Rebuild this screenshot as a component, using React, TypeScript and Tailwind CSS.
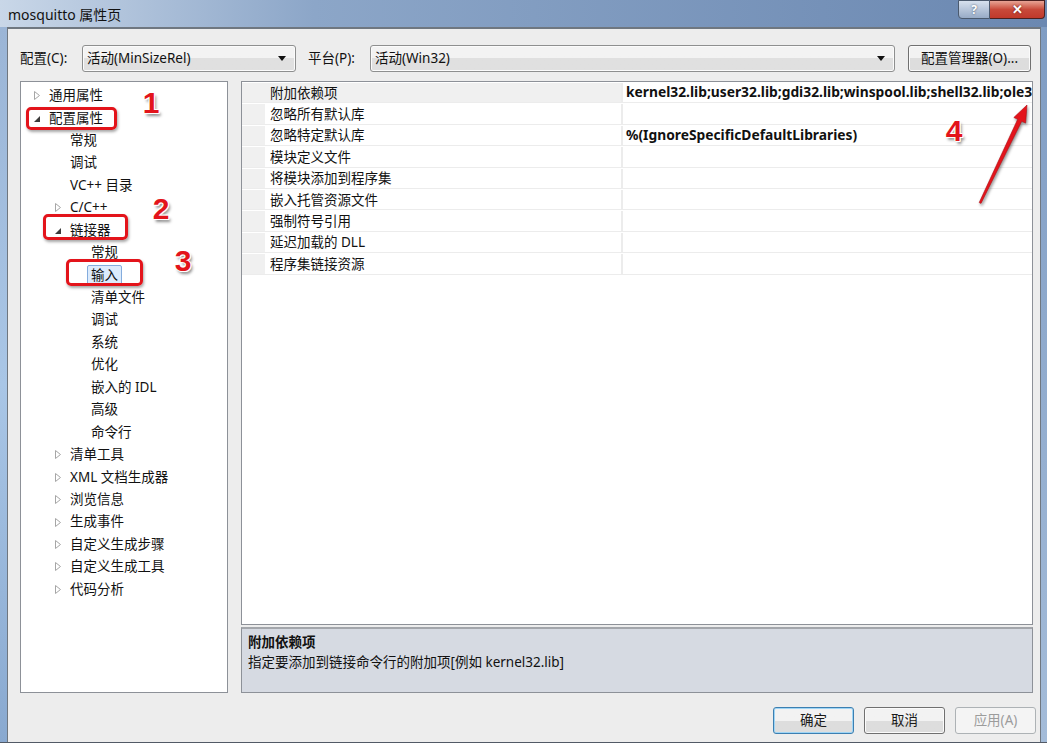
import React from "react";

type TreeNode = {
  label: string;
  level: number;
  arrow?: "open" | "closed";
  selected?: boolean;
};

const treeItems: TreeNode[] = [
  { label: "通用属性", level: 0, arrow: "closed" },
  { label: "配置属性", level: 0, arrow: "open" },
  { label: "常规", level: 1 },
  { label: "调试", level: 1 },
  { label: "VC++ 目录", level: 1 },
  { label: "C/C++", level: 1, arrow: "closed" },
  { label: "链接器", level: 1, arrow: "open" },
  { label: "常规", level: 2 },
  { label: "输入", level: 2, selected: true },
  { label: "清单文件", level: 2 },
  { label: "调试", level: 2 },
  { label: "系统", level: 2 },
  { label: "优化", level: 2 },
  { label: "嵌入的 IDL", level: 2 },
  { label: "高级", level: 2 },
  { label: "命令行", level: 2 },
  { label: "清单工具", level: 1, arrow: "closed" },
  { label: "XML 文档生成器", level: 1, arrow: "closed" },
  { label: "浏览信息", level: 1, arrow: "closed" },
  { label: "生成事件", level: 1, arrow: "closed" },
  { label: "自定义生成步骤", level: 1, arrow: "closed" },
  { label: "自定义生成工具", level: 1, arrow: "closed" },
  { label: "代码分析", level: 1, arrow: "closed" },
];

const properties: { name: string; value?: string }[] = [
  {
    name: "附加依赖项",
    value:
      "kernel32.lib;user32.lib;gdi32.lib;winspool.lib;shell32.lib;ole32.lib;oleaut32.lib;uuid.lib;odbc32.lib;odbccp32.lib;%(AdditionalDependencies)",
  },
  { name: "忽略所有默认库" },
  { name: "忽略特定默认库", value: "%(IgnoreSpecificDefaultLibraries)" },
  { name: "模块定义文件" },
  { name: "将模块添加到程序集" },
  { name: "嵌入托管资源文件" },
  { name: "强制符号引用" },
  { name: "延迟加载的 DLL" },
  { name: "程序集链接资源" },
];

const indent = ["pl-[13px]", "pl-[34px]", "pl-[55px]"];

const TreeArrow = ({ kind }: { kind?: "open" | "closed" }) => {
  if (kind === "closed") {
    return (
      <svg width="6" height="9" viewBox="0 0 6 9" className="mt-[1px]">
        <polygon points="0.5,0.5 5.5,4.5 0.5,8.5" fill="#fff" stroke="#a6a6a6" />
      </svg>
    );
  }
  if (kind === "open") {
    return (
      <svg width="6" height="6" viewBox="0 0 6 6" className="mt-[3px]">
        <polygon points="0,6 6,6 6,0" fill="#3c3c3c" />
      </svg>
    );
  }
  return null;
};

const Combo = ({ text, width }: { text: string; width: string }) => (
  <div
    className={`${width} shrink-0 h-[27px] flex items-center justify-between rounded-[3px] border border-[#8e8f8f] bg-gradient-to-b from-[#f3f3f3] from-50% to-[#e0e0e0] to-50% pl-[4px] pr-[9px] shadow-[inset_0_0_0_1px_#fbfbfb]`}
  >
    <span>{text}</span>
    <svg width="8" height="5" viewBox="0 0 8 5">
      <polygon points="0,0 8,0 4,5" fill="#111" />
    </svg>
  </div>
);

const DialogButton = ({
  label,
  variant,
}: {
  label: string;
  variant?: "default" | "disabled";
}) => {
  const tone =
    variant === "default"
      ? "border-[#3c7fb1] shadow-[inset_0_0_0_1px_#9fd5f5] text-[#1a1a1a]"
      : variant === "disabled"
        ? "border-[#adb2b5] bg-none bg-[#f4f4f4] text-[#9c9c9c]"
        : "border-[#707070] shadow-[inset_0_0_0_1px_#fbfbfb] text-[#1a1a1a]";
  return (
    <div
      className={`w-[81px] h-[27px] flex items-center justify-center rounded-[3px] border bg-gradient-to-b from-[#f2f2f2] from-50% to-[#dddddd] to-50% ${tone}`}
    >
      {label}
    </div>
  );
};

const RedBox = ({ className }: { className: string }) => (
  <div
    className={`absolute rounded-[5px] border-[3px] border-[#e3141b] shadow-[1px_2px_3px_rgba(0,0,0,0.35)] ${className}`}
  />
);

const Marker = ({ n, className }: { n: string; className: string }) => (
  <div
    className={`absolute w-[30px] text-center leading-none font-['Liberation_Sans',Arial,sans-serif] font-bold text-[30px] text-[#e3141b] [text-shadow:1px_0_0_#fff,-1px_0_0_#fff,0_1px_0_#fff,0_-1px_0_#fff,1px_1px_0_#fff,-1px_-1px_0_#fff,2px_3px_3px_rgba(0,0,0,0.45)] ${className}`}
  >
    {n}
  </div>
);

export default function App() {
  return (
    <div className="relative w-[1047px] h-[743px] overflow-hidden flex flex-col bg-[#8aa5c9] font-['Noto_Sans','Noto_Sans_CJK_SC',sans-serif] text-[13.5px] text-[#111]">
      {/* window caption */}
      <div className="h-[27px] shrink-0 flex items-start justify-between bg-gradient-to-r from-[#c9d7e8] via-[#8ca6c8] via-30% to-[#6b88b1] pl-[8px] pr-[2px]">
        <span className="mt-[4px] text-[14px] text-[#111]">mosquitto 属性页</span>
        <div className="flex">
          <div className="w-[32px] h-[19px] flex items-center justify-center rounded-bl-[4px] border border-[#4b5a6e] bg-gradient-to-b from-[#d7e1ee] to-[#98abc6] text-[12px] font-bold text-white [text-shadow:0_0_2px_#3a4a60]">
            ?
          </div>
          <div className="w-[55px] h-[19px] flex items-center justify-center rounded-br-[4px] border border-l-0 border-[#4b2020] bg-gradient-to-b from-[#e7a395] via-[#c8493a] via-50% to-[#c0392b] text-[13px] font-bold text-white [text-shadow:0_0_2px_#5a1010]">
            ✕
          </div>
        </div>
      </div>

      <div className="flex-1 min-h-0 flex">
        {/* left window frame */}
        <div className="w-[7px] shrink-0 bg-gradient-to-b from-[#9bb5d6] via-[#a9c6e6] to-[#89a9d0]" />

        <div className="flex-1 min-w-0 flex flex-col border-t-2 border-l border-r border-[#6f7780] bg-[#ededed] pl-[12px] pr-[7px] pt-[16px]">
          {/* configuration / platform */}
          <div className="h-[27px] flex items-center">
            <span className="w-[62px] shrink-0">配置(C):</span>
            <Combo text="活动(MinSizeRel)" width="w-[214px]" />
            <span className="w-[62px] shrink-0 ml-[12px]">平台(P):</span>
            <Combo text="活动(Win32)" width="w-[525px]" />
            <div className="ml-[13px] w-[123px] shrink-0 h-[27px] flex items-center justify-center rounded-[3px] border border-[#707070] bg-gradient-to-b from-[#f2f2f2] from-50% to-[#dddddd] to-50% shadow-[inset_0_0_0_1px_#fbfbfb]">
              配置管理器(O)...
            </div>
          </div>

          <div className="mt-[9px] h-[612px] flex gap-[13px]">
            {/* category tree */}
            <div className="w-[208px] shrink-0 border border-[#8d9198] bg-white pt-[2px]">
              {treeItems.map((item, i) => (
                <div key={i} className={`h-[22.45px] flex items-center ${indent[item.level]}`}>
                  <div className="w-[15px] flex items-center">
                    <TreeArrow kind={item.arrow} />
                  </div>
                  {item.selected ? (
                    <span className="-ml-[4px] px-[3px] h-[20px] flex items-center rounded-[2px] border border-[#84acdd] bg-[#dcebfc]">
                      {item.label}
                    </span>
                  ) : (
                    <span>{item.label}</span>
                  )}
                </div>
              ))}
            </div>

            {/* property grid and description */}
            <div className="flex-1 min-w-0 flex flex-col gap-[2px]">
              <div className="flex-1 min-w-0 overflow-hidden border border-[#8d9198] bg-white">
                {properties.map((p, i) => (
                  <div key={i} className="h-[21.4px] flex border-b border-[#ececec] pt-[1px]">
                    <div className="w-[23px] shrink-0 bg-[#f0f0f0]" />
                    <div
                      className={`w-[358px] shrink-0 flex items-center pl-[5px] border-r-2 border-[#ececec] ${i === 0 ? "bg-[#f0f0f0]" : ""}`}
                    >
                      {p.name}
                    </div>
                    <div className="flex-1 min-w-0 flex items-center pl-[3px] overflow-hidden whitespace-nowrap font-bold text-[13.8px]">
                      {p.value}
                    </div>
                  </div>
                ))}
              </div>
              <div className="h-[66px] shrink-0 border border-[#8d9198] border-t-2 border-t-[#a3a6ab] bg-[#d6dae2] pl-[6px] pt-[3px]">
                <div className="font-bold leading-[20px]">附加依赖项</div>
                <div className="leading-[20px]">指定要添加到链接命令行的附加项[例如 kernel32.lib]</div>
              </div>
            </div>
          </div>

          {/* dialog buttons */}
          <div className="mt-[14px] h-[27px] flex justify-end gap-[10px] -mr-[3px]">
            <DialogButton label="确定" variant="default" />
            <DialogButton label="取消" />
            <DialogButton label="应用(A)" variant="disabled" />
          </div>
          <div className="h-[8px]" />
        </div>

        {/* right window frame */}
        <div className="w-[6px] shrink-0 bg-gradient-to-b from-[#7f9cc3] to-[#a4bcd9]" />
      </div>
      <div className="h-[1px] shrink-0 bg-[#525a66]" />

      {/* callouts */}
      <RedBox className="left-[26px] top-[107px] w-[91px] h-[23px]" />
      <RedBox className="left-[43px] top-[214px] w-[85px] h-[26px]" />
      <RedBox className="left-[66px] top-[259px] w-[77px] h-[27px]" />
      <Marker n="1" className="left-[136px] top-[88px]" />
      <Marker n="2" className="left-[146px] top-[194px]" />
      <Marker n="3" className="left-[168px] top-[246px]" />
      <Marker n="4" className="left-[939px] top-[116px]" />
      <svg
        className="absolute left-0 top-0 pointer-events-none"
        width="1047"
        height="743"
        viewBox="0 0 1047 743"
      >
        <polygon
          points="981,203.4 1021.7,121.3 1025.6,123.1 1027,105 1013.8,117.5 1017.7,119.3 979.2,202.6"
          fill="#e3141b"
          stroke="#b00e14"
          strokeWidth="0.6"
          style={{ filter: "drop-shadow(1px 2px 1.5px rgba(0,0,0,0.45))" }}
        />
      </svg>
    </div>
  );
}
